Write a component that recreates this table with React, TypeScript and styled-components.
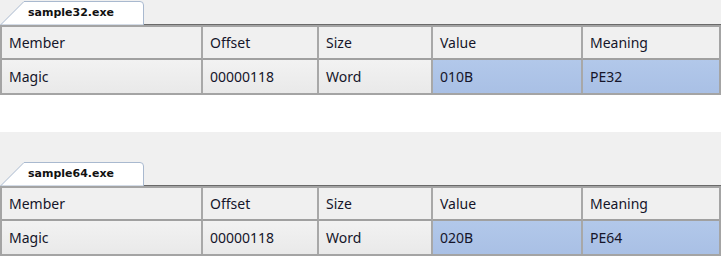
import React from 'react';
import styled, {createGlobalStyle} from "styled-components";

const GlobalStyle = createGlobalStyle`
  html, body {
    margin: 0;
    padding: 0;
    background: #ffffff;
  }
`

const Page = styled.div`
  width: 721px;
  height: 256px;
  overflow: hidden;
  display: flex;
  flex-direction: column;
  gap: 37px;
`

const Panel = styled.section<{ $top: number }>`
  background: #f0f0f0;
  padding-top: ${p => p.$top}px;
  display: flex;
  flex-direction: column;
`

const TabStrip = styled.div`
  height: 24px;
  display: flex;
  align-items: flex-end;
`

const Tab = styled.div`
  position: relative;
  width: 144px;
  height: 24px;
  font-family: "DejaVu Sans", Verdana, sans-serif;
  font-weight: bold;
  font-size: 11px;
  color: #111;
  display: flex;
  align-items: center;
  padding-left: 28px;
  box-sizing: border-box;

  svg {
    position: absolute;
    inset: 0;
    z-index: 0;
  }

  span {
    position: relative;
    z-index: 1;
    margin-top: -1px;
  }
`

const TabRule = styled.div`
  flex: 1;
  height: 1px;
  background: #6a6a6a;
`

const Table = styled.div`
  display: grid;
  grid-template-columns: 201px 116px 114px 150px 1fr;
  border: 2px solid #a4a4a4;
  width: 721px;
  box-sizing: border-box;
  font-family: "Noto Sans", "Open Sans", sans-serif;
  font-size: 14px;
  color: #15152a;
`

const Cell = styled.div<{ $selected?: boolean; $head?: boolean }>`
  height: 33px;
  display: flex;
  align-items: center;
  padding-left: 7px;
  box-sizing: border-box;
  border-right: 2px solid #a8a8a8;
  border-bottom: 2px solid #a0a0a0;
  background: ${p => p.$selected
    ? 'linear-gradient(#b2c8ea, #a9c0e5)'
    : p.$head ? '#f0f0f0' : 'linear-gradient(#f2f2f2, #e9e9e9)'};

  &:nth-child(5n) {
    border-right: none;
  }

  &:nth-child(n+6) {
    border-bottom: none;
  }
`

const TabShape: React.FC = () => (
    <svg width="144" height="24" viewBox="0 0 144 24">
        <path d="M0.5 24 L24 0.5 H140 Q143.5 0.5 143.5 4 V24 Z" fill="#ffffff" stroke="#a9b9cf"/>
    </svg>
)

const columns = ['Member', 'Offset', 'Size', 'Value', 'Meaning']

const HeaderPanel: React.FC<{ file: string; value: string; meaning: string; top: number }> = ({file, value, meaning, top}) => (
    <Panel $top={top}>
        <TabStrip>
            <Tab>
                <TabShape/>
                <span>{file}</span>
            </Tab>
            <TabRule/>
        </TabStrip>
        <Table>
            {columns.map(c => <Cell key={c} $head>{c}</Cell>)}
            <Cell>Magic</Cell>
            <Cell>00000118</Cell>
            <Cell>Word</Cell>
            <Cell $selected>{value}</Cell>
            <Cell $selected>{meaning}</Cell>
        </Table>
    </Panel>
)

const App: React.FC = () => {
    return (
        <Page>
            <GlobalStyle/>
            <HeaderPanel file="sample32.exe" value="010B" meaning="PE32" top={1}/>
            <HeaderPanel file="sample64.exe" value="020B" meaning="PE64" top={30}/>
        </Page>
    );
}

export default App;
